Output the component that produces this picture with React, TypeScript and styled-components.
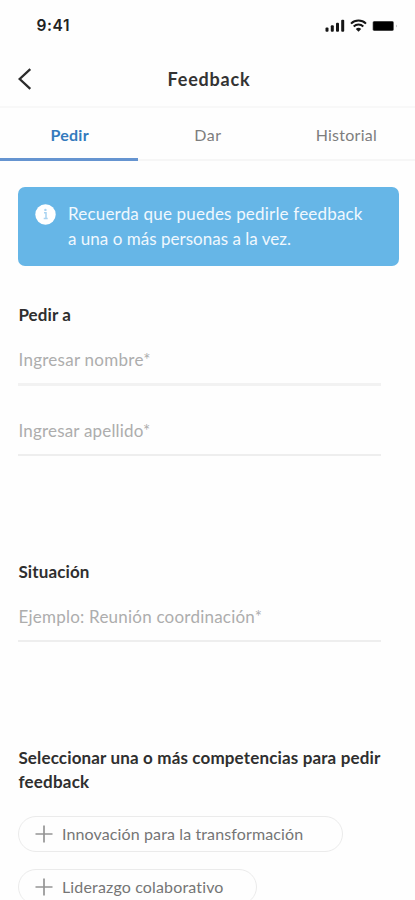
import React from 'react';
import styled, { createGlobalStyle } from 'styled-components';

const GlobalStyle = createGlobalStyle`
  * { box-sizing: border-box; }
  html, body { margin: 0; height: 100%; background: #fefefe; }
  body { overflow: hidden; font-family: Lato, 'Open Sans', sans-serif; }
  button, input { font-family: inherit; }
`;

const Screen = styled.div`
  width: 100%;
  max-width: 415px;
  height: 900px;
  overflow: hidden;
  background: #fefefe;
  display: flex;
  flex-direction: column;
`;

const StatusBar = styled.div`
  height: 52px;
  flex: none;
  display: flex;
  justify-content: space-between;
  align-items: center;
  padding: 0 17px 0 36.5px;
`;

const Clock = styled.span`
  font: 600 15.5px/20px Inter, sans-serif;
  letter-spacing: 0.6px;
  color: #222;
`;

const StatusIcons = styled.div`
  display: flex;
  align-items: center;
  gap: 5px;
  svg { display: block; }
`;

const Header = styled.header`
  flex: none;
  height: 56px;
  border-bottom: 2px solid #f8f8f8;
  display: grid;
  grid-template-columns: 60px 1fr 60px;
  align-items: center;
`;

const BackButton = styled.button`
  border: 0;
  padding: 0 0 0 17px;
  background: none;
  display: flex;
`;

const Title = styled.h1`
  margin: 0;
  padding-left: 3px;
  text-align: center;
  font-size: 18px;
  line-height: 24px;
  font-weight: 700;
  letter-spacing: 0.8px;
  color: #333;
`;

const Tabs = styled.nav`
  flex: none;
  height: 53px;
  display: grid;
  grid-template-columns: repeat(3, 1fr);
`;

const Tab = styled.button<{ $active?: boolean; $spacing: number }>`
  border: 0;
  border-bottom: ${p => (p.$active ? '3px solid #6594d0' : '2px solid #f6f6f6')};
  padding: ${p => (p.$active ? '3px 0 0 1px' : '2px 0 0 1px')};
  background: none;
  font-size: 16px;
  line-height: 24px;
  font-weight: ${p => (p.$active ? 700 : 400)};
  letter-spacing: ${p => p.$spacing}px;
  color: ${p => (p.$active ? '#347abd' : '#7d7d7d')};
`;

const Content = styled.main`
  flex: none;
  padding: 26px 16px 0 18px;
`;

const Banner = styled.aside`
  height: 79px;
  border-radius: 7px;
  background: #66b6e7;
  padding: 15px 17px 0;
  display: flex;
  gap: 12px;
`;

const BannerIcon = styled.svg`
  flex: none;
  margin-top: 2px;
`;

const BannerText = styled.p`
  margin: 0;
  font-size: 17px;
  line-height: 24.5px;
  color: #f0f8fe;
`;

const Line = styled.span<{ $spacing: number }>`
  display: block;
  white-space: nowrap;
  letter-spacing: ${p => p.$spacing}px;
`;

const Section = styled.section<{ $gap: number }>`
  margin-top: ${p => p.$gap}px;
  width: 363px;
`;

const SectionTitle = styled.h2`
  margin: 0;
  padding-left: 0.4px;
  font-size: 17px;
  line-height: 24px;
  font-weight: 700;
  color: #2f2f2f;
`;

const Field = styled.input<{ $spacing: number; $heavy?: boolean; $gap: number }>`
  display: block;
  width: 100%;
  height: 42px;
  margin-top: ${p => p.$gap}px;
  padding: 0 0 8px 0.5px;
  border: 0;
  border-bottom: ${p => (p.$heavy ? '3px solid #f2f2f2' : '2px solid #eeeeee')};
  border-radius: 0;
  outline: 0;
  background: none;
  font-size: 17px;
  line-height: 24px;
  letter-spacing: ${p => p.$spacing}px;
  color: #333;
  &::placeholder { color: #adadad; opacity: 1; }
`;

const Chips = styled.div`
  margin-top: 22px;
  display: flex;
  flex-direction: column;
  align-items: flex-start;
  gap: 17px;
`;

const Chip = styled.button<{ $width: number; $spacing: number }>`
  width: ${p => p.$width}px;
  height: 36px;
  padding: 0 0 0 16px;
  border: 1.5px solid #ebebeb;
  border-radius: 18px;
  background: #fefefe;
  display: flex;
  align-items: center;
  gap: 9px;
  font-size: 16px;
  line-height: 24px;
  letter-spacing: ${p => p.$spacing}px;
  white-space: nowrap;
  color: #757575;
`;

const Plus = () => (
  <svg width="18" height="18" viewBox="0 0 18 18" stroke="#959595" strokeWidth="1.7" fill="none">
    <path d="M9 .5v17M.5 9h17" />
  </svg>
);

const Signal = () => (
  <svg width="20" height="14" viewBox="0 0 20 14" fill="#161616">
    <rect x="0.5" y="8.5" width="3" height="4.3" rx="1" />
    <rect x="5.8" y="6.3" width="3" height="6.5" rx="1" />
    <rect x="11" y="3.8" width="3" height="9" rx="1" />
    <rect x="16.2" y="0.8" width="3" height="12" rx="1" />
  </svg>
);

const Wifi = () => (
  <svg width="17" height="14" viewBox="0 0 17 14" fill="none" stroke="#161616" strokeWidth="2">
    <path d="M1 4.6a10.8 10.8 0 0 1 15 0" />
    <path d="M3.7 7.5a7 7 0 0 1 9.6 0" />
    <path d="M8.5 12.8 5.8 10a4 4 0 0 1 5.4 0z" fill="#161616" stroke="none" />
  </svg>
);

const Battery = () => (
  <svg width="26" height="12" viewBox="0 0 26 12">
    <rect x="0.5" y="1" width="21.5" height="10" rx="1.8" fill="#888" />
    <rect x="1.2" y="1.5" width="20" height="9" rx="1" fill="#000" />
    <path d="M24.3 4.5q1.6 1.5 0 3z" fill="#999" />
  </svg>
);

export default function App() {
  return (
    <>
      <GlobalStyle />
      <Screen>
        <StatusBar>
          <Clock>9:41</Clock>
          <StatusIcons>
            <Signal />
            <Wifi />
            <Battery />
          </StatusIcons>
        </StatusBar>
        <Header>
          <BackButton aria-label="Volver">
            <svg width="16" height="22" viewBox="0 0 16 22" fill="none" stroke="#2c2c2c" strokeWidth="2.3">
              <path d="M13.3 1.2 2.7 11l10.6 9.8" />
            </svg>
          </BackButton>
          <Title>Feedback</Title>
        </Header>
        <Tabs>
          <Tab $active $spacing={0.25}>Pedir</Tab>
          <Tab $spacing={0.5}>Dar</Tab>
          <Tab $spacing={0.25}>Historial</Tab>
        </Tabs>
        <Content>
          <Banner>
            <BannerIcon width="21" height="21" viewBox="0 0 21 21">
              <circle cx="10.5" cy="10.5" r="10.2" fill="#fff" />
              <path d="M9 8.8h2v5.6M8.7 14.6h4" fill="none" stroke="#a9d3f1" strokeWidth="1.5" />
              <circle cx="10.4" cy="5.9" r="1.2" fill="#a9d3f1" />
            </BannerIcon>
            <BannerText>
              <Line $spacing={0.19}>Recuerda que puedes pedirle feedback</Line>
              <Line $spacing={0.02}>a una o más personas a la vez.</Line>
            </BannerText>
          </Banner>
          <Section $gap={37}>
            <SectionTitle><Line $spacing={0.1}>Pedir a</Line></SectionTitle>
            <Field $gap={17} $spacing={0.26} $heavy placeholder="Ingresar nombre*" />
            <Field $gap={28} $spacing={0.18} placeholder="Ingresar apellido*" />
          </Section>
          <Section $gap={104}>
            <SectionTitle><Line $spacing={0.12}>Situación</Line></SectionTitle>
            <Field $gap={16} $spacing={0.22} placeholder="Ejemplo: Reunión coordinación*" />
          </Section>
          <Section $gap={104}>
            <SectionTitle>
              <Line $spacing={0.15}>Seleccionar una o más competencias para pedir</Line>
              <Line $spacing={0.22}>feedback</Line>
            </SectionTitle>
            <Chips>
              <Chip $width={325} $spacing={0.12}><Plus />Innovación para la transformación</Chip>
              <Chip $width={239} $spacing={0.15}><Plus />Liderazgo colaborativo</Chip>
            </Chips>
          </Section>
        </Content>
      </Screen>
    </>
  );
}
